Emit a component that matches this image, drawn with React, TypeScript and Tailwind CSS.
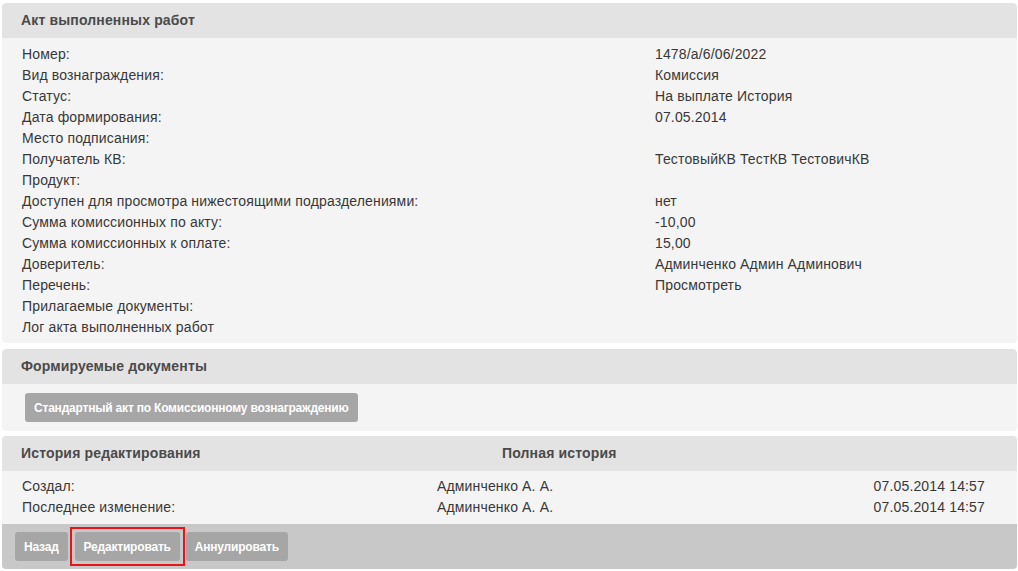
const details: [string, string][] = [
  ["Номер:", "1478/a/6/06/2022"],
  ["Вид вознаграждения:", "Комиссия"],
  ["Статус:", "На выплате История"],
  ["Дата формирования:", "07.05.2014"],
  ["Место подписания:", ""],
  ["Получатель КВ:", "ТестовыйКВ ТестКВ ТестовичКВ"],
  ["Продукт:", ""],
  ["Доступен для просмотра нижестоящими подразделениями:", "нет"],
  ["Сумма комиссионных по акту:", "-10,00"],
  ["Сумма комиссионных к оплате:", "15,00"],
  ["Доверитель:", "Админченко Админ Админович"],
  ["Перечень:", "Просмотреть"],
  ["Прилагаемые документы:", ""],
  ["Лог акта выполненных работ", ""],
];

const history = [
  ["Создал:", "Админченко А. А.", "07.05.2014 14:57"],
  ["Последнее изменение:", "Админченко А. А.", "07.05.2014 14:57"],
];

function PanelHeader({ children }: { children: React.ReactNode }) {
  return (
    <div className="h-[35px] flex items-center px-[19px] bg-[#e3e3e3] rounded-t-[4px] text-[14px] font-bold tracking-[0.15px] text-[#4a4a4a]">
      {children}
    </div>
  );
}

function GreyButton({ children }: { children: React.ReactNode }) {
  return (
    <button className="h-[29px] px-[9px] rounded-[3px] bg-[#a6a6a6] text-white text-[12px] font-bold tracking-[-0.2px]">
      {children}
    </button>
  );
}

export default function App() {
  return (
    <div
      className="min-h-screen bg-white pt-[3px] pl-[2px] pr-[1px] text-[14px] tracking-[0.15px] text-[#383838]"
      style={{ fontFamily: "'Liberation Sans', Arial, sans-serif" }}
    >
      {/* Акт */}
      <div className="rounded-[4px] overflow-hidden">
        <PanelHeader>Акт выполненных работ</PanelHeader>
        <div className="bg-[#f4f4f4] pt-[6px] pb-[5px] pl-[20px]">
          {details.map(([label, value]) => (
            <div key={label} className="grid grid-cols-[633px_1fr] h-[21px] items-center">
              <span>{label}</span>
              <span>{value}</span>
            </div>
          ))}
        </div>
      </div>

      {/* Формируемые документы */}
      <div className="mt-[6px] rounded-[4px] overflow-hidden">
        <PanelHeader>Формируемые документы</PanelHeader>
        <div className="bg-[#f4f4f4] pt-[9px] pb-[9px] pl-[23px]">
          <GreyButton>Стандартный акт по Комиссионному вознаграждению</GreyButton>
        </div>
      </div>

      {/* История */}
      <div className="mt-[5px] rounded-[4px] overflow-hidden">
        <div className="h-[35px] grid grid-cols-[481px_1fr] items-center px-[19px] bg-[#e3e3e3] text-[14px] font-bold tracking-[0.15px] text-[#4a4a4a]">
          <span>История редактирования</span>
          <span>Полная история</span>
        </div>
        <div className="bg-[#f4f4f4] pt-[5px] pb-[6px] pl-[20px] pr-[32px]">
          {history.map(([label, who, date]) => (
            <div key={label} className="grid grid-cols-[415px_1fr_auto] h-[21px] items-center">
              <span>{label}</span>
              <span>{who}</span>
              <span>{date}</span>
            </div>
          ))}
        </div>
        <div className="h-[45px] bg-[#c8c8c8] flex items-center gap-[6px] pl-[13px]">
          <GreyButton>Назад</GreyButton>
          <div className="ml-[1px] outline-2 outline-[#e8141a] outline-offset-[3px] rounded-none">
            <GreyButton>Редактировать</GreyButton>
          </div>
          <GreyButton>Аннулировать</GreyButton>
        </div>
      </div>
    </div>
  );
}
